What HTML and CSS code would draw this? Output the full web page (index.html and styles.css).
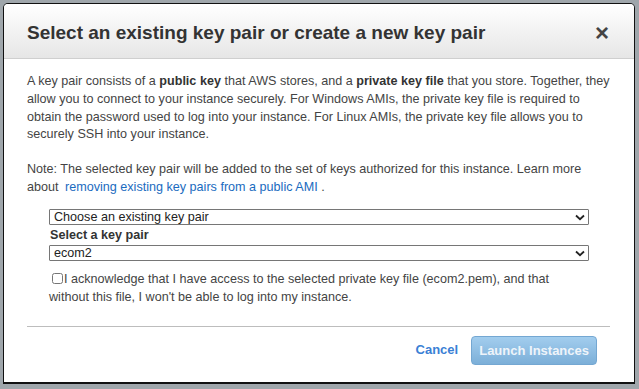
FILE: index.html
```html
<!DOCTYPE html>
<html lang="en">
<head>
    <meta charset="UTF-8">
    <meta name="viewport" content="width=device-width, initial-scale=1.0">
    <title>Select key pair</title>
    <link rel="stylesheet" href="styles.css">
</head>

<body>
    <div class="modal">
        <div class="modal-header">
            <h1>Select an existing key pair or create a new key pair</h1>
            <span class="close">&times;</span>
        </div>

        <div class="modal-body">
            <p>A key pair consists of a <b>public key</b> that AWS stores, and a <b>private key file</b> that you store. Together, they allow you to connect to your instance securely. For Windows AMIs, the private key file is required to obtain the password used to log into your instance. For Linux AMIs, the private key file allows you to securely SSH into your instance.</p>

            <p class="note">Note: The selected key pair will be added to the set of keys authorized for this instance. Learn more about <a href="#">removing existing key pairs from a public AMI</a> .</p>

            <div class="key-form">
                <div class="select-wrap">
                    <select>
                        <option>Choose an existing key pair</option>
                        <option>Create a new key pair</option>
                        <option>Proceed without a key pair</option>
                    </select>
                    <svg class="chevron" width="10" height="7" viewBox="0 0 10 7"><path d="M1 1.5 L5 5.2 L9 1.5" fill="none" stroke="#222" stroke-width="1.8"/></svg>
                </div>

                <label class="field-label">Select a key pair</label>
                <div class="select-wrap">
                    <select>
                        <option>ecom2</option>
                    </select>
                    <svg class="chevron" width="10" height="7" viewBox="0 0 10 7"><path d="M1 1.5 L5 5.2 L9 1.5" fill="none" stroke="#222" stroke-width="1.8"/></svg>
                </div>

                <label class="ack"><input type="checkbox">I acknowledge that I have access to the selected private key file (ecom2.pem), and that without this file, I won't be able to log into my instance.</label>
            </div>
        </div>

        <div class="modal-footer">
            <a href="#" class="cancel">Cancel</a>
            <button type="button" class="launch-button" disabled>Launch Instances</button>
        </div>
    </div>
</body>
</html>
```

FILE: styles.css
```css
body {
    font-family: Arial, "Liberation Sans", sans-serif;
    margin: 0;
    padding: 3px;
    background-color: #9fa6ab;
    color: #444;
}

.modal {
    width: 632px;
    height: 381px;
    box-sizing: border-box;
    background-color: white;
    border: 1px solid #111;
    border-bottom-width: 2px;
    border-radius: 5px 5px 0 0;
    display: flex;
    flex-direction: column;
}

.modal-header {
    height: 55px;
    box-sizing: border-box;
    padding: 4px 23px 0 23px;
    display: flex;
    align-items: center;
    justify-content: space-between;
    background: linear-gradient(#ffffff, #e6e6e6);
    border-bottom: 1px solid #cfcfcf;
    border-radius: 4px 4px 0 0;
}

.modal-header h1 {
    margin: 0;
    font-size: 19px;
    font-weight: bold;
    color: #333;
}

.close {
    font-size: 24px;
    font-weight: bold;
    color: #444;
    line-height: 1;
    margin-right: 2px;
}

.modal-body {
    padding: 14px 20px 0 23px;
    font-size: 12.6px;
    line-height: 17.8px;
}

.modal-body p {
    margin: 0 0 17px 0;
}

.modal-body b {
    color: #333;
}

.modal-body .note {
    margin-bottom: 12px;
}

.modal-body a {
    color: #1a6bc0;
    text-decoration: none;
    margin-left: 3px;
}

.key-form {
    margin-left: 22px;
    width: 540px;
}

.select-wrap {
    position: relative;
}

.select-wrap select {
    appearance: none;
    display: block;
    width: 100%;
    height: 16px;
    box-sizing: border-box;
    margin: 0;
    padding: 0 0 0 4px;
    font-family: Arial, "Liberation Sans", sans-serif;
    font-size: 12.6px;
    line-height: 14px;
    color: #222;
    background-color: white;
    border: 1px solid #767676;
    border-radius: 1px;
}

.chevron {
    position: absolute;
    right: 4px;
    top: 5px;
    pointer-events: none;
}

.field-label {
    display: block;
    font-weight: bold;
    color: #333;
    margin: 2px 0 1px 1px;
    line-height: 17px;
}

.ack {
    display: block;
    margin-top: 10px;
    color: #444;
}

.ack input {
    width: 11px;
    height: 11px;
    margin: 0 1px 0 3px;
    vertical-align: -1px;
}

.modal-footer {
    margin: auto 24px 0 23px;
    border-top: 1px solid #bdbdbd;
    height: 56px;
    box-sizing: border-box;
    padding: 9px 13px 0 0;
    display: flex;
    align-items: flex-start;
    justify-content: flex-end;
    gap: 13px;
}

.cancel {
    color: #3a7fd5;
    font-weight: bold;
    font-size: 13px;
    line-height: 28px;
    text-decoration: none;
}

.launch-button {
    height: 29px;
    padding: 0 7px;
    font-family: Arial, "Liberation Sans", sans-serif;
    font-size: 13px;
    font-weight: bold;
    color: #eef4fa;
    background: linear-gradient(#a2cdee, #7cafd8);
    border: 1px solid #74a7d2;
    border-radius: 4px;
}
```
